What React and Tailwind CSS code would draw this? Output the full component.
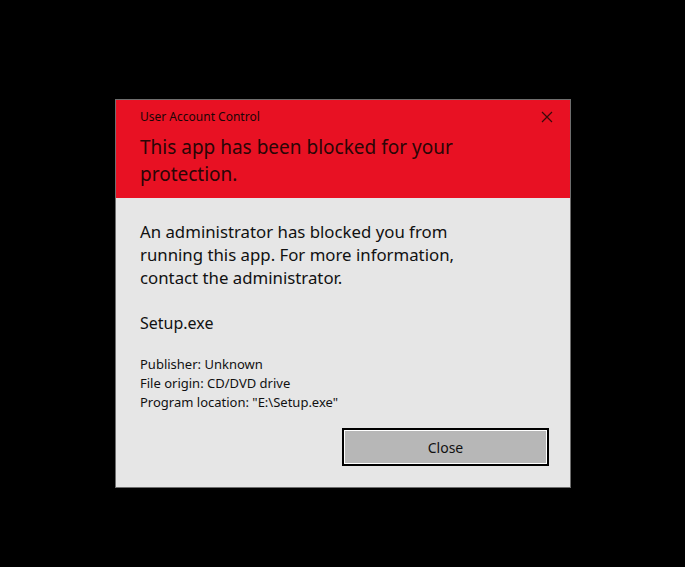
export default function App() {
  return (
    <div className="w-[685px] h-[567px] bg-black pt-[99px] pl-[115px]" style={{ fontFamily: '"Noto Sans", "Open Sans", sans-serif' }}>
      <div className="w-[456px] h-[389px] border border-[#6e6e6e] bg-[#e6e6e6] flex flex-col">
        <div className="bg-[#e81123] h-[98px] pl-[24px] pr-[16px] pt-[8px] flex flex-col">
          <div className="flex items-center justify-between h-[18px]">
            <span className="text-[12px] text-[#1a0505] leading-[18px]">User Account Control</span>
            <svg width="12" height="12" viewBox="0 0 12 12" className="mr-[1px]">
              <path d="M1 1 L11 11 M11 1 L1 11" stroke="#3a0a0a" strokeWidth="1.2" />
            </svg>
          </div>
          <div className="mt-[8px] text-[19px] leading-[27px] text-[#2a0606]">
            This app has been blocked for your<br />protection.
          </div>
        </div>
        <div className="flex-1 pl-[24px] pr-[21px] pt-[22px] flex flex-col">
          <div className="text-[16.8px] leading-[23px] text-[#111]">
            An administrator has blocked you from<br />running this app. For more information,<br />contact the administrator.
          </div>
          <div className="mt-[22px] text-[16px] leading-[24px] text-[#111]">Setup.exe</div>
          <div className="mt-[20px] text-[13px] leading-[19px] text-[#111]">
            <div>Publisher: Unknown</div>
            <div>File origin: CD/DVD drive</div>
            <div>Program location: "E:\Setup.exe"</div>
          </div>
          <div className="flex justify-end mt-[16px]">
            <button className="w-[207px] h-[38px] border-2 border-black p-0 bg-white">
              <div className="w-full h-full border border-white bg-[#b7b7b7] flex items-center justify-center text-[14px] text-[#111]">Close</div>
            </button>
          </div>
        </div>
      </div>
    </div>
  );
}
